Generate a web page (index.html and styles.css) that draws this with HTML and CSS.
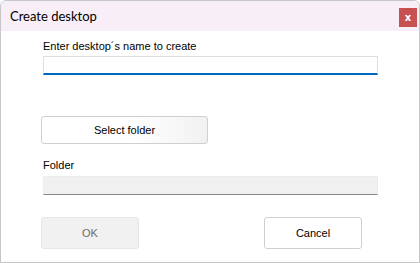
FILE: index.html
```html
<!DOCTYPE html>
<html lang="en">
<head>
    <meta charset="UTF-8">
    <title>Create desktop</title>
    <link rel="stylesheet" href="styles.css">
</head>
<body>
    <div class="dialog">
        <div class="title-bar">
            <span class="title">Create desktop</span>
            <button class="close-btn" type="button">x</button>
        </div>

        <div class="dialog-body">
            <label class="field-label" for="desktopName">Enter desktop´s name to create</label>
            <input type="text" id="desktopName" class="text-input">

            <button type="button" class="btn btn-select">Select folder</button>

            <label class="field-label folder-label" for="folder">Folder</label>
            <input type="text" id="folder" class="text-input readonly-input" readonly>

            <div class="actions">
                <button type="button" class="btn btn-disabled">OK</button>
                <button type="button" class="btn">Cancel</button>
            </div>
        </div>
    </div>
</body>
</html>
```

FILE: styles.css
```css
* {
    margin: 0;
    padding: 0;
    box-sizing: border-box;
}

body {
    font-family: "Liberation Sans", Arial, sans-serif;
    font-size: 11px;
    color: #000;
    background: #fff;
}

.dialog {
    width: 420px;
    height: 263px;
    border: 1px solid #c6c6c6;
    border-radius: 6px 6px 0 0;
    background: #fff;
    overflow: hidden;
}

.title-bar {
    height: 30px;
    background: #f8eef7;
    display: flex;
    justify-content: space-between;
    align-items: flex-start;
    padding: 0 2px 0 9px;
}

.title {
    font-family: Lato, "Noto Sans", sans-serif;
    font-size: 13px;
    line-height: 30px;
}

.close-btn {
    width: 18px;
    height: 19px;
    margin-top: 7px;
    border: none;
    background: #c75050;
    color: #fff;
    font-family: "DejaVu Sans", sans-serif;
    font-weight: bold;
    font-size: 10px;
    line-height: 19px;
}

.dialog-body {
    padding: 9px 0 0 42px;
}

.field-label {
    display: block;
    line-height: 13px;
    margin-bottom: 3px;
}

.folder-label {
    margin-top: 15px;
    margin-bottom: 4px;
}

.text-input {
    display: block;
    width: 335px;
    height: 19px;
    border: 1px solid #dedede;
    border-bottom: 2px solid #0067c0;
    background: #fff;
    outline: none;
}

.readonly-input {
    background: #f0f0f0;
    border-color: #ececec;
    border-bottom: 1px solid #858585;
}

.btn {
    font-family: "Liberation Sans", Arial, sans-serif;
    font-size: 11px;
    color: #000;
    width: 98px;
    height: 32px;
    background: #fff;
    border: 1px solid #cfcfcf;
    border-radius: 3px;
}

.btn-select {
    display: block;
    width: 167px;
    height: 28px;
    margin: 41px 0 0 -2px;
    background: linear-gradient(to right, #fff 55%, #f1f1f1 100%);
}

.btn-disabled {
    background: #f1f1f1;
    border-color: #e6e6e6;
    color: #6d6d6d;
}

.actions {
    display: flex;
    gap: 125px;
    margin: 22px 0 0 -2px;
}
```
